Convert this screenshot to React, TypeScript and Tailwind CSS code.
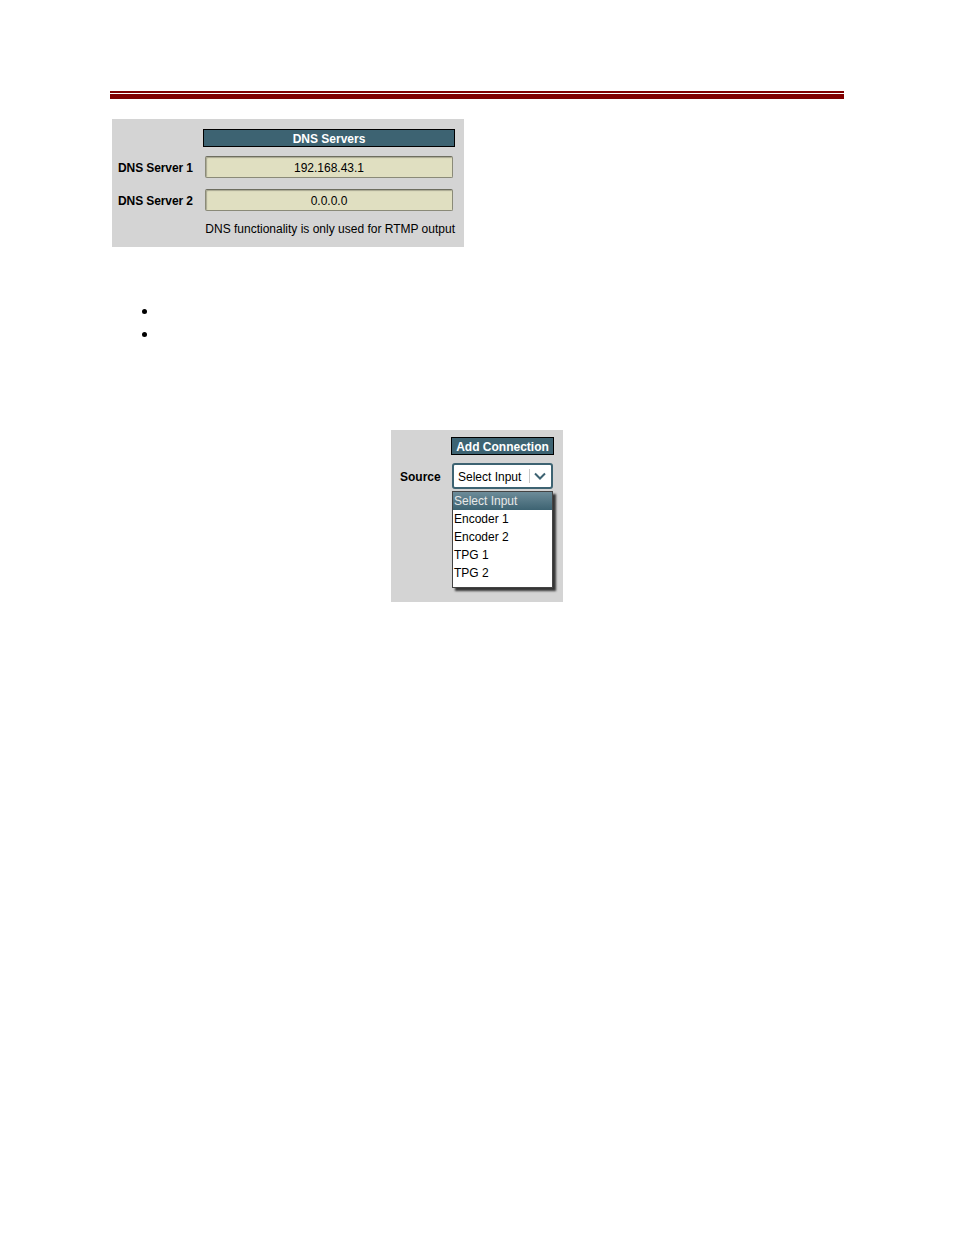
import type { ReactNode } from "react";

const font = { fontFamily: '"Liberation Sans", Arial, sans-serif' };

function HeaderBar({ children, className = "" }: { children: ReactNode; className?: string }) {
  return (
    <div
      className={`flex h-[18px] items-center justify-center border border-black bg-[#3d6372] pt-px text-[12px] font-bold leading-none text-white ${className}`}
    >
      {children}
    </div>
  );
}

function IpField({ value }: { value: string }) {
  return (
    <div className="ml-[2px] flex h-[22px] w-[248px] items-center justify-center rounded-[2px] border border-[#8a8a78] border-t-[#6e6e60] bg-[#e0dfc1] pt-px text-[12px] text-black shadow-[inset_1px_1px_1px_rgba(0,0,0,0.25)]">
      {value}
    </div>
  );
}

function DnsPanel() {
  return (
    <div className="ml-[112px] mt-[20px] h-[128px] w-[352px] bg-[#d4d4d4] pl-[6px] pt-[10px]">
      <div className="flex">
        <div className="w-[85px]" />
        <HeaderBar className="w-[252px]">DNS Servers</HeaderBar>
      </div>
      <div className="mt-[9px] flex items-center">
        <div className="w-[85px] pt-px text-[12px] font-bold tracking-[-0.1px] text-black">DNS Server 1</div>
        <IpField value="192.168.43.1" />
      </div>
      <div className="mt-[11px] flex items-center">
        <div className="w-[85px] pt-px text-[12px] font-bold tracking-[-0.1px] text-black">DNS Server 2</div>
        <IpField value="0.0.0.0" />
      </div>
      <div className="mt-[11px] flex">
        <div className="w-[85px]" />
        <div className="w-[252px] text-right text-[12px] leading-[14px] text-black">
          DNS functionality is only used for RTMP output
        </div>
      </div>
    </div>
  );
}

function Bullets() {
  return (
    <div className="ml-[142px] mt-[62px] flex flex-col gap-[18px]">
      <span className="block size-[5px] rounded-full bg-black" />
      <span className="block size-[5px] rounded-full bg-black" />
    </div>
  );
}

function ConnectionPanel() {
  const options = ["Encoder 1", "Encoder 2", "TPG 1", "TPG 2"];
  return (
    <div className="ml-[391px] mt-[93px] h-[172px] w-[172px] bg-[#d4d4d4] pt-[7px]">
      <div className="flex">
        <div className="w-[60px]" />
        <HeaderBar className="w-[103px]">Add Connection</HeaderBar>
      </div>
      <div className="mt-[8px] flex items-center">
        <div className="w-[61px] pl-[9px] pt-px text-[12px] font-bold text-black">Source</div>
        <div className="flex h-[26px] w-[101px] items-center rounded-[3px] border-2 border-[#3d6372] bg-white pl-[4px] text-[12px] text-black">
          <span className="w-[71px] pt-px">Select Input</span>
          <span className="h-[14px] w-px bg-[#c8c8c8]" />
          <svg width="12" height="8" viewBox="0 0 12 8" className="ml-[4px]">
            <path d="M1 1.5 L6 6.5 L11 1.5" fill="none" stroke="#3d6372" strokeWidth="2" />
          </svg>
        </div>
      </div>
      <div className="ml-[61px] mt-[2px] h-[97px] w-[101px] border border-[#444] bg-white shadow-[3px_3px_2px_rgba(0,0,0,0.75)]">
        <div className="flex h-[18px] items-center bg-gradient-to-b from-[#6d8c99] to-[#3d6372] pl-[1px] text-[12px] text-[#e8e8e8]">
          Select Input
        </div>
        {options.map((o) => (
          <div key={o} className="flex h-[18px] items-center pl-[1px] text-[12px] text-black">
            {o}
          </div>
        ))}
      </div>
    </div>
  );
}

export default function App() {
  return (
    <div className="min-h-[1235px] w-[954px] bg-white pt-[91px]" style={font}>
      <div className="ml-[110px] w-[734px]">
        <div className="h-[2px] bg-[#800000]" />
        <div className="mt-[1px] h-[5px] bg-[#800000]" />
      </div>
      <DnsPanel />
      <Bullets />
      <ConnectionPanel />
    </div>
  );
}
